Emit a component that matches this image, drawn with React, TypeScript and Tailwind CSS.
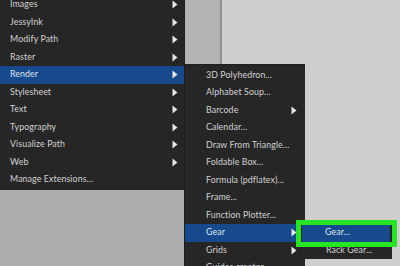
const mainItems = [
	{ label: "Images", sub: true },
	{ label: "JessyInk", sub: true },
	{ label: "Modify Path", sub: true },
	{ label: "Raster", sub: true },
	{ label: "Render", sub: true, active: true },
	{ label: "Stylesheet", sub: true },
	{ label: "Text", sub: true },
	{ label: "Typography", sub: true },
	{ label: "Visualize Path", sub: true },
	{ label: "Web", sub: true },
	{ label: "Manage Extensions...", sub: false },
];

const renderItems = [
	{ label: "3D Polyhedron...", sub: false },
	{ label: "Alphabet Soup...", sub: false },
	{ label: "Barcode", sub: true },
	{ label: "Calendar...", sub: false },
	{ label: "Draw From Triangle...", sub: false },
	{ label: "Foldable Box...", sub: false },
	{ label: "Formula (pdflatex)...", sub: false },
	{ label: "Frame...", sub: false },
	{ label: "Function Plotter...", sub: false },
	{ label: "Gear", sub: true, active: true },
	{ label: "Grids", sub: true },
	{ label: "Guides creator...", sub: false },
];

function Arrow() {
	return (
		<svg width="6" height="9" viewBox="0 0 6 9" className="shrink-0">
			<path d="M0.5 0.5 L5.5 4.5 L0.5 8.5 Z" fill="#e6e6e6" />
		</svg>
	);
}

function Row({ label, sub, active, pl, pr }: { label: string; sub?: boolean; active?: boolean; pl: string; pr: string }) {
	return (
		<div
			className={`flex items-center justify-between h-[17.5px] shrink-0 ${pl} ${pr} ${
				active ? "bg-[#164a8c] text-[#dfe6f0]" : "text-[#d2d2d2]"
			}`}
		>
			<span className="whitespace-nowrap tracking-[0.1px]">{label}</span>
			{sub && <Arrow />}
		</div>
	);
}

export default function App() {
	return (
		<div
			className="relative w-[400px] h-[266px] overflow-hidden flex bg-[#cfcfcf] text-[8.8px] leading-none"
			style={{ fontFamily: 'Lato, "Noto Sans", sans-serif' }}
		>
			<div className="w-[185px] flex flex-col shrink-0 border-r-[1px] border-[#1c1c1c]">
				<div className="h-[190px] shrink-0 bg-[#262626] flex flex-col">
					<div className="mt-[-4px] flex flex-col">
						{mainItems.map((it) => (
							<Row key={it.label} {...it} pl="pl-[10px]" pr="pr-[6px]" />
						))}
					</div>
				</div>
				<div className="flex-1 bg-[#acacac]" />
			</div>
			<div className="w-[120px] flex flex-col shrink-0 overflow-hidden">
				<div className="h-[64px] shrink-0 flex">
					<div className="w-[35px] bg-[#b3b3b3]" />
					<div className="w-[2px] bg-[#8f8f8f]" />
					<div className="flex-1 bg-[#cfcfcf]" />
				</div>
				<div className="flex-1 bg-[#262626] flex flex-col pt-[1.5px] border-t-[1px] border-[#1f1f1f]">
					{renderItems.map((it) => (
						<Row key={it.label} {...it} pl="pl-[21px]" pr="pr-[8px]" />
					))}
				</div>
			</div>
			<div className="flex-1 bg-[#cfcfcf]" />

			<div className="absolute left-[300px] top-[221px] w-[92px] h-[38px] bg-[#262626] flex flex-col pt-[3px] px-[2px]">
				<Row label="Gear..." active pl="pl-[23px]" pr="pr-[4px]" />
				<Row label="Rack Gear..." pl="pl-[24px]" pr="pr-[4px]" />
			</div>
			<div className="absolute left-[296px] top-[220px] w-[101px] h-[27px] border-[5px] border-[#27e526]" />
		</div>
	);
}
